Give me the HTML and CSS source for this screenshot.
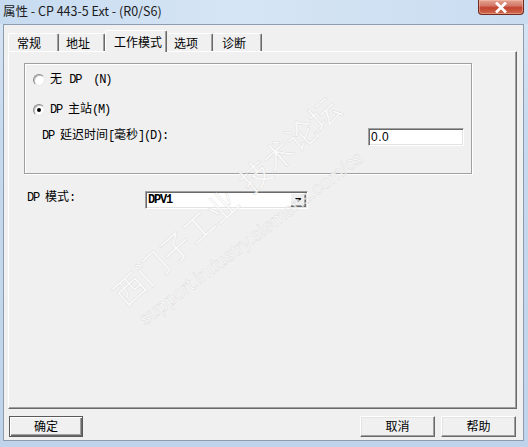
FILE: index.html
```html
<!DOCTYPE html>
<html lang="zh">
<head>
<meta charset="utf-8">
<title>属性 - CP 443-5 Ext - (R0/S6)</title>
<link rel="stylesheet" href="styles.css">
</head>
<body>
<div class="window">
  <div class="titlebar">
    <span class="title">属性 - CP 443-5 Ext - (R0/S6)</span>
    <div class="close">
      <svg width="14" height="11" viewBox="0 0 14 11"><path d="M3 1.5 L11 9.5 M11 1.5 L3 9.5" stroke="#fff" stroke-width="2.8" stroke-linecap="square" fill="none"/></svg>
    </div>
  </div>
  <div class="client">
    <div class="tabs">
      <div class="tab w1">常规</div>
      <div class="tab w2">地址</div>
      <div class="tab w3 active">工作模式</div>
      <div class="tab w4">选项</div>
      <div class="tab w5">诊断</div>
    </div>
    <div class="panel">
      <div class="group">
        <div class="radio-row">
          <span class="radio"></span>
          <span class="lbl">无 <span class="m">DP  (N)</span></span>
        </div>
        <div class="radio-row second">
          <span class="radio checked"></span>
          <span class="lbl"><span class="m">DP </span>主站<span class="m">(M)</span></span>
        </div>
        <div class="field-row">
          <span class="lbl"><span class="m">DP </span>延迟时间<span class="m">[</span>毫秒<span class="m">](D):</span></span>
          <div class="input"><span class="m">0.0</span></div>
        </div>
      </div>
      <div class="mode-row">
        <span class="lbl"><span class="m">DP </span>模式<span class="m">:</span></span>
        <div class="combo">
          <span class="combo-text m">DPV1</span>
          <span class="combo-btn"><svg width="7" height="4" viewBox="0 0 7 4"><path d="M0 0 H7 L3.5 4 Z" fill="#000"/></svg></span>
        </div>
      </div>
    </div>
    <div class="buttons">
      <div class="btn default">确定</div>
      <div class="btn-group">
        <div class="btn">取消</div>
        <div class="btn">帮助</div>
      </div>
    </div>
  </div>
  <div class="watermark wm1">西门子工业&nbsp;&nbsp;技术论坛</div>
  <div class="watermark wm2">support.industry.siemens.com/cs</div>
</div>
</body>
</html>
```

FILE: styles.css
```css
html, body {
  margin: 0;
  padding: 0;
  background: #c9dbef;
}

.window {
  position: relative;
  width: 528px;
  height: 447px;
  overflow: hidden;
  background: linear-gradient(180deg, #d8e6f5 0%, #c6d9ee 30%, #bfd3ea 100%);
  font-family: "Noto Sans CJK SC", "Liberation Sans", sans-serif;
  font-size: 12px;
  color: #000;
  display: flex;
  flex-direction: column;
}

.titlebar {
  height: 24px;
  display: flex;
  align-items: flex-start;
  background: linear-gradient(90deg, #c7dbf0 0%, #d6e5f5 45%, #c9dcf0 100%);
}

.title {
  padding: 3px 0 0 3px;
  line-height: 16px;
  font-size: 12.5px;
  color: #1b1b1b;
}

.close {
  margin-left: auto;
  margin-right: 4px;
  width: 46px;
  height: 15px;
  box-sizing: border-box;
  border: 1px solid #6f2b22;
  border-top: none;
  border-radius: 0 0 4px 4px;
  background: linear-gradient(180deg, #e4a593 0%, #d4786a 40%, #c2432f 55%, #cf6a4f 100%);
  box-shadow: inset 0 0 0 1px rgba(255, 200, 180, 0.45);
  display: flex;
  align-items: center;
  justify-content: center;
}

.client {
  margin: 0 4px 0 3px;
  border: 1px solid #8f9cad;
  background: #f0f0f0;
  padding: 5px 6px 3px 4px;
  display: flex;
  flex-direction: column;
}

/* tabs */
.tabs {
  display: flex;
  align-items: flex-end;
  height: 21px;
}

.tab {
  box-sizing: border-box;
  height: 18px;
  padding-left: 8px;
  line-height: 17px;
  border-top: 1px solid #fff;
  border-left: 1px solid #fff;
  border-right: 1px solid #696969;
  box-shadow: inset -1px 0 0 #a0a0a0;
  border-radius: 2px 2px 0 0;
  background: #f0f0f0;
  white-space: nowrap;
}

.tab.w1 { width: 51px; }
.tab.w2 { width: 46px; border-left-color: #f0f0f0; padding-left: 6px; }
.tab.w3 { width: 62px; }
.tab.w4 { width: 46px; border-left-color: #f0f0f0; padding-left: 6px; }
.tab.w5 { width: 49px; border-left-color: #f0f0f0; }

.tab.active {
  position: relative;
  z-index: 1;
  height: 22px;
  margin-bottom: -1px;
  line-height: 20px;
  padding-top: 1px;
}

/* panel */
.panel {
  position: relative;
  height: 358px;
  box-sizing: border-box;
  border-top: 1px solid #fff;
  border-left: 1px solid #fff;
  border-right: 1px solid #696969;
  border-bottom: 1px solid #696969;
  box-shadow: inset -1px -1px 0 #a0a0a0;
  padding: 11px 0 0 15px;
  font-family: "Liberation Mono", "Noto Sans CJK SC", monospace;
  font-size: 12px;
}

.m {
  letter-spacing: -1.2px;
  white-space: pre;
}

.lbl {
  line-height: 16px;
  white-space: nowrap;
}

.group {
  box-sizing: border-box;
  width: 448px;
  height: 111px;
  border: 1px solid #a0a0a0;
  box-shadow: inset 1px 1px 0 #fff, 1px 1px 0 #fff;
  padding: 8px 0 0 8px;
  display: flex;
  flex-direction: column;
}

.radio-row {
  display: flex;
  align-items: center;
  height: 16px;
  gap: 5px;
}

.radio-row.second {
  margin-top: 14px;
}

.radio {
  width: 12px;
  height: 12px;
  box-sizing: border-box;
  border-radius: 50%;
  background: #fff;
  border: 1px solid;
  border-color: #8a8a8a #e8e8e8 #e8e8e8 #8a8a8a;
  box-shadow: inset 1px 1px 0 #c0c0c0;
  display: flex;
  align-items: center;
  justify-content: center;
}

.radio.checked::after {
  content: "";
  width: 4px;
  height: 4px;
  border-radius: 50%;
  background: #000;
}

.field-row {
  margin-top: 10px;
  padding-left: 9px;
  display: grid;
  grid-template-columns: 326px 96px;
  align-items: center;
  height: 18px;
}

.field-row .lbl {
  margin-top: -3px;
}

.input {
  box-sizing: border-box;
  height: 18px;
  background: #fff;
  border: 1px solid;
  border-color: #a0a0a0 #fff #fff #a0a0a0;
  box-shadow: inset 1px 1px 0 #696969, inset -1px -1px 0 #e3e3e3;
  padding: 1px 0 0 2px;
  line-height: 15px;
  font-family: "Liberation Sans", sans-serif;
  font-size: 12px;
}

.input .m {
  letter-spacing: 0.5px;
}

.mode-row {
  margin-top: 17px;
  padding-left: 3px;
  display: grid;
  grid-template-columns: 118px 163px;
  align-items: center;
}

.mode-row .lbl {
  margin-top: -4px;
}

.combo {
  box-sizing: border-box;
  height: 18px;
  background: #fff;
  border: 1px solid;
  border-color: #a0a0a0 #fff #fff #a0a0a0;
  box-shadow: inset 1px 1px 0 #696969, inset -1px -1px 0 #e3e3e3;
  padding: 1px 1px 1px 2px;
  display: flex;
  align-items: stretch;
}

.combo-text {
  flex: 1;
  line-height: 15px;
  font-weight: bold;
  font-size: 12px;
}

.combo-btn {
  width: 16px;
  box-sizing: border-box;
  background: #f0f0f0;
  border: 1px solid;
  border-color: #fff #696969 #696969 #fff;
  box-shadow: inset -1px -1px 0 #a0a0a0;
  display: flex;
  align-items: center;
  justify-content: center;
}

/* buttons */
.buttons {
  margin-top: 7px;
  padding: 0 1px;
  display: flex;
  justify-content: space-between;
}

.btn-group {
  display: flex;
  gap: 6px;
}

.btn {
  box-sizing: border-box;
  width: 75px;
  height: 21px;
  border: 1px solid;
  border-color: #fff #696969 #696969 #fff;
  box-shadow: inset -1px -1px 0 #a0a0a0, inset 1px 1px 0 #e3e3e3;
  background: #f0f0f0;
  text-align: center;
  line-height: 18px;
  font-size: 12px;
}

.btn.default {
  width: 74px;
  border: 1px solid #5a5a5a;
  box-shadow: inset 1px 1px 0 #fff, inset -1px -1px 0 #696969, inset -2px -2px 0 #a0a0a0;
}

/* watermark overlay */
.watermark {
  position: absolute;
  white-space: nowrap;
  color: rgba(252, 252, 252, 0.75);
  -webkit-text-stroke: 0.5px rgba(190, 190, 190, 0.45);
  transform-origin: left bottom;
  pointer-events: none;
}

.wm1 {
  left: 132px;
  top: 270px;
  font-size: 31px;
  font-family: "Noto Sans CJK SC", sans-serif;
  transform: rotate(-42deg);
}

.wm2 {
  left: 148px;
  top: 308px;
  font-size: 19px;
  font-family: "Liberation Sans", sans-serif;
  transform: rotate(-37deg);
}
```
